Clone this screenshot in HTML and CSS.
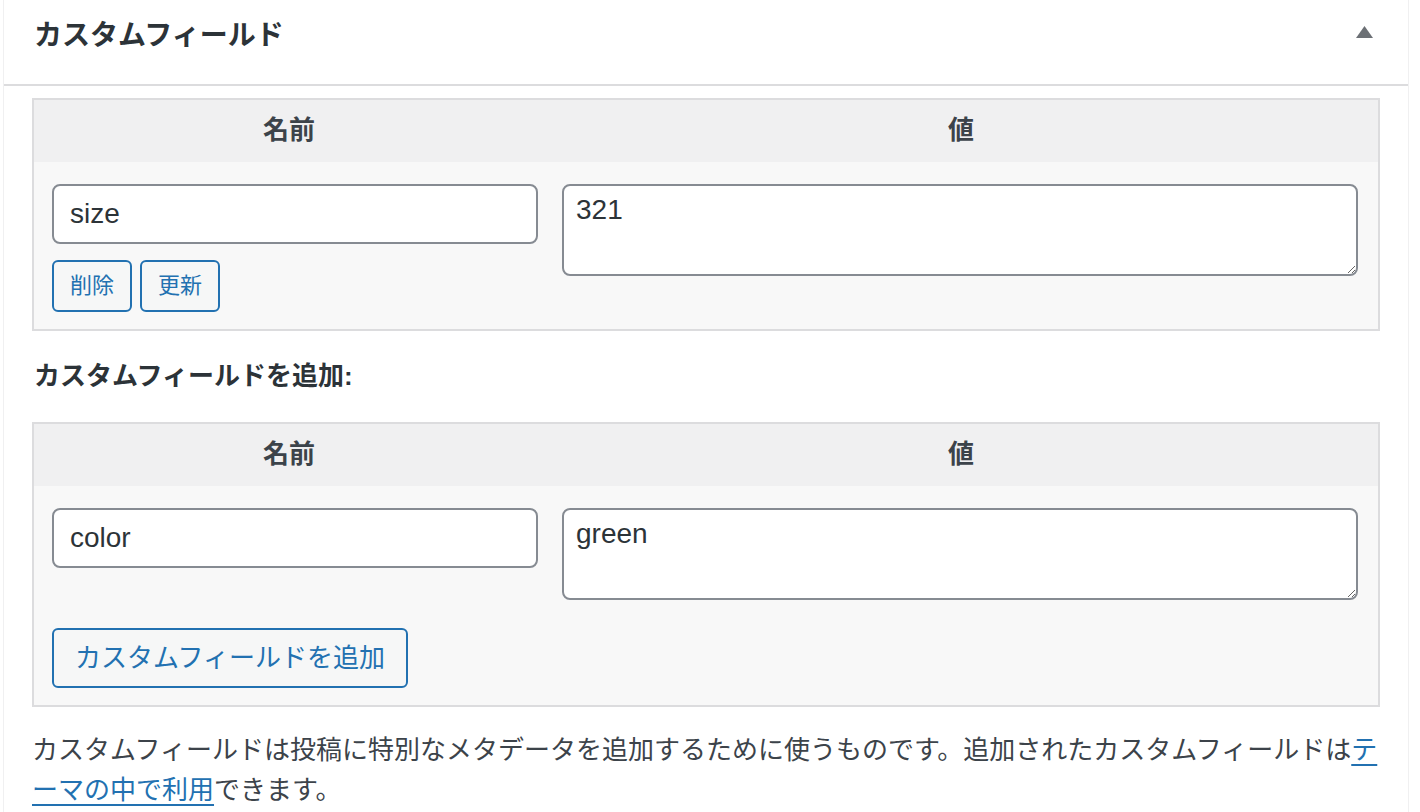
FILE: index.html
```html
<!DOCTYPE html>
<html lang="ja">
<head>
<meta charset="utf-8">
<title>カスタムフィールド</title>
<link rel="stylesheet" href="styles.css">
</head>
<body>
<div class="postbox">
  <div class="postbox-header">
    <h2 class="hndle">カスタムフィールド</h2>
    <span class="toggle-indicator" aria-hidden="true">
      <svg width="17" height="12" viewBox="0 0 17 12"><polygon points="0,12 8.5,0 17,12" fill="#6c7075"/></svg>
    </span>
  </div>
  <div class="inside">
    <div class="meta-table">
      <div class="meta-head">
        <div class="col-left">名前</div>
        <div class="col-right">値</div>
      </div>
      <div class="meta-row">
        <div class="col-left">
          <input class="field" type="text" value="size">
          <div class="row-actions">
            <button class="button button-small" type="button">削除</button>
            <button class="button button-small" type="button">更新</button>
          </div>
        </div>
        <div class="col-right">
          <textarea class="value">321</textarea>
        </div>
      </div>
    </div>

    <p class="add-new">カスタムフィールドを追加:</p>

    <div class="meta-table">
      <div class="meta-head">
        <div class="col-left">名前</div>
        <div class="col-right">値</div>
      </div>
      <div class="meta-row new-row">
        <div class="col-left">
          <input class="field" type="text" value="color">
        </div>
        <div class="col-right">
          <textarea class="value">green</textarea>
        </div>
      </div>
      <div class="submit-row">
        <button class="button" type="button">カスタムフィールドを追加</button>
      </div>
    </div>

    <p class="desc">カスタムフィールドは投稿に特別なメタデータを追加するために使うものです。追加されたカスタムフィールドは<a href="#">テーマの中で利用</a>できます。</p>
  </div>
</div>
</body>
</html>
```

FILE: styles.css
```css
* { box-sizing: border-box; }

html, body {
  margin: 0;
  padding: 0;
  background: #ffffff;
}

body {
  font-family: "Liberation Sans", "Noto Sans CJK JP", sans-serif;
  color: #3c434a;
  font-size: 26px;
  line-height: 40px;
}

.postbox {
  margin-left: 3px;
  width: 1406px;
  min-height: 812px;
  border-left: 1px solid #f0f0f1;
  border-right: 1px solid #f0f0f1;
}

.postbox-header {
  display: flex;
  justify-content: space-between;
  align-items: flex-start;
  height: 86px;
  border-bottom: 2px solid #dcdcde;
  padding: 0 35px 0 30px;
}

.hndle {
  margin: 16px 0 0;
  font-size: 28px;
  line-height: 40px;
  font-weight: 700;
  color: #2c3338;
}

.toggle-indicator {
  display: block;
  margin-top: 26px;
  width: 17px;
  height: 12px;
}
.toggle-indicator svg { display: block; }

.inside {
  padding: 12px 28px 0;
}

.meta-table {
  border: 2px solid #dcdcde;
  background: #f8f8f8;
}

.meta-head {
  display: flex;
  background: #f0f0f1;
  font-weight: 700;
  font-size: 26px;
  line-height: 36px;
  color: #3c434a;
  padding: 12px 0 14px;
}
.meta-head .col-left,
.meta-head .col-right {
  text-align: center;
}

.col-left {
  width: 510px;
  flex: none;
}
.col-right {
  flex: 1;
}

.meta-row {
  display: flex;
  padding: 22px 0 17px;
}
.new-row {
  padding-bottom: 0;
}

.field {
  display: block;
  margin: 0 0 0 18px;
  width: 486px;
  height: 60px;
  padding: 0 16px;
  border: 2px solid #868b92;
  border-radius: 8px;
  background: #fff;
  color: #2c3338;
  font-family: "Liberation Sans", "Noto Sans CJK JP", sans-serif;
  font-size: 28px;
  line-height: 56px;
  outline: none;
}

.value {
  display: block;
  margin: 0 0 0 18px;
  width: 796px;
  height: 92px;
  padding: 4px 12px;
  border: 2px solid #868b92;
  border-radius: 8px;
  background: #fff;
  color: #2c3338;
  font-family: "Liberation Sans", "Noto Sans CJK JP", sans-serif;
  font-size: 28px;
  line-height: 40px;
  resize: vertical;
  outline: none;
}

.row-actions {
  display: flex;
  gap: 8px;
  margin: 16px 0 0 18px;
}

.button {
  display: inline-flex;
  align-items: center;
  height: 60px;
  padding: 0 21px;
  border: 2px solid #2271b1;
  border-radius: 6px;
  background: #f6f7f7;
  color: #2271b1;
  font-family: "Liberation Sans", "Noto Sans CJK JP", sans-serif;
  font-size: 26px;
  line-height: 56px;
  cursor: pointer;
}

.button-small {
  height: 52px;
  padding: 0 16px;
  font-size: 22px;
  line-height: 48px;
}

.submit-row {
  padding: 28px 18px 17px;
}

.add-new {
  margin: 25px 0 26px 2px;
  font-weight: 700;
  font-size: 26px;
  line-height: 40px;
  color: #2c3338;
}

.desc {
  margin: 23px 0 0;
  width: 1362px;
  font-size: 26px;
  line-height: 40px;
  color: #3c434a;
  line-break: loose;
}

.desc a {
  color: #2271b1;
  text-decoration: underline;
  text-decoration-thickness: 2px;
  text-underline-offset: 5px;
}
```
